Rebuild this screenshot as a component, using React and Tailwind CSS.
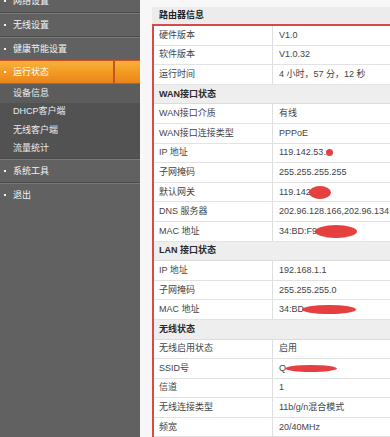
import React from "react";

function Blob({ w, h, ml = 0, mt = 0 }) {
  return (
    <svg
      width={w}
      height={h}
      className="inline-block align-middle"
      style={{ marginLeft: ml, marginTop: mt }}
    >
      <ellipse cx={w / 2} cy={h / 2} rx={w / 2} ry={h / 2} fill="#e3302f" opacity="0.92" />
    </svg>
  );
}

function Sep() {
  return (
    <div>
      <div className="h-[1px] bg-[#4a4a4a]" />
      <div className="h-[1px] bg-[#7a7a7a]" />
    </div>
  );
}

function MainItem({ label }) {
  return (
    <div className="h-[22px] flex items-center pl-[4px]">
      <span className="w-[2px] h-[2px] bg-[#f4f4f4] mr-[7px]" />
      <span>{label}</span>
    </div>
  );
}

const rows = [
  ["硬件版本", "V1.0"],
  ["软件版本", "V1.0.32"],
  ["运行时间", "4 小时，57 分，12 秒"],
  { h: "WAN接口状态" },
  ["WAN接口介质", "有线"],
  ["WAN接口连接类型", "PPPoE"],
  ["IP 地址", "119.142.53.", <Blob key="b" w={7} h={7} ml={0} />],
  ["子网掩码", "255.255.255.255"],
  ["默认网关", "119.142", <Blob key="b" w={22} h={13} ml={-2} />],
  ["DNS 服务器", "202.96.128.166,202.96.134.133"],
  ["MAC 地址", "34:BD:F9", <Blob key="b" w={42} h={13} ml={-2} />],
  { h: "LAN 接口状态" },
  ["IP 地址", "192.168.1.1"],
  ["子网掩码", "255.255.255.0"],
  ["MAC 地址", "34:BD", <Blob key="b" w={54} h={9} ml={-2} />],
  { h: "无线状态" },
  ["无线启用状态", "启用"],
  ["SSID号", "Q", <Blob key="b" w={52} h={7} ml={-1} />],
  ["信道", "1"],
  ["无线连接类型", "11b/g/n混合模式"],
  ["频宽", "20/40MHz"],
];

export default function App() {
  return (
    <div className="w-[390px] h-[437px] overflow-hidden flex bg-white font-['Liberation_Sans','Noto_Sans_CJK_SC',sans-serif] text-[9px] leading-none">
      {/* Sidebar */}
      <div className="w-[140px] shrink-0 bg-[#616161] text-[#f2f2f2]">
        <div className="-mt-[10px]">
          <MainItem label="网络设置" />
          <Sep />
          <MainItem label="无线设置" />
          <Sep />
          <MainItem label="健康节能设置" />
          <div className="h-[24px] flex border-y border-[#d5511f] bg-gradient-to-b from-[#f6b23c] via-[#f39a22] to-[#ea851c]">
            <div className="w-[115px] flex items-center pl-[4px] border-r-2 border-[#c9521e] text-white">
              <span className="w-[2px] h-[2px] bg-white mr-[7px]" />
              <span>运行状态</span>
            </div>
          </div>
          <div className="bg-[#525252] text-[#ececec]">
            <div className="h-[18.5px] flex items-center pl-[13px] bg-[#5c5c5c]">设备信息</div>
            <div className="h-[18.5px] flex items-center pl-[13px]">DHCP客户端</div>
            <div className="h-[18.5px] flex items-center pl-[13px]">无线客户端</div>
            <div className="h-[18.5px] flex items-center pl-[13px]">流量统计</div>
          </div>
          <Sep />
          <MainItem label="系统工具" />
          <Sep />
          <MainItem label="退出" />
        </div>
      </div>

      {/* Content */}
      <div className="flex-1 bg-[#f7f7f7] pl-[12px] pt-[7px]">
        <div className="w-[320px] bg-white">
          <div className="h-[17px] bg-[#ececec] pl-[7px] flex items-center font-bold text-[#222]">
            路由器信息
          </div>
          <div className="border-t-2 border-l-2 border-[#d64a4a]">
            {rows.map((r, i) =>
              r.h ? (
                <div
                  key={i}
                  className="h-[19.6px] bg-[#eeeeee] border-b border-[#dcdcdc] pl-[5px] flex items-center font-bold text-[#2a2a2a]"
                >
                  {r.h}
                </div>
              ) : (
                <div key={i} className="h-[19.6px] flex border-b border-[#e2e2e2] text-[#444]">
                  <div className="w-[119px] shrink-0 border-r border-[#dedede] pl-[5px] flex items-center">
                    {r[0]}
                  </div>
                  <div className="pl-[6px] flex items-center whitespace-nowrap">
                    <span>{r[1]}</span>
                    {r[2]}
                  </div>
                </div>
              )
            )}
          </div>
        </div>
      </div>
    </div>
  );
}
